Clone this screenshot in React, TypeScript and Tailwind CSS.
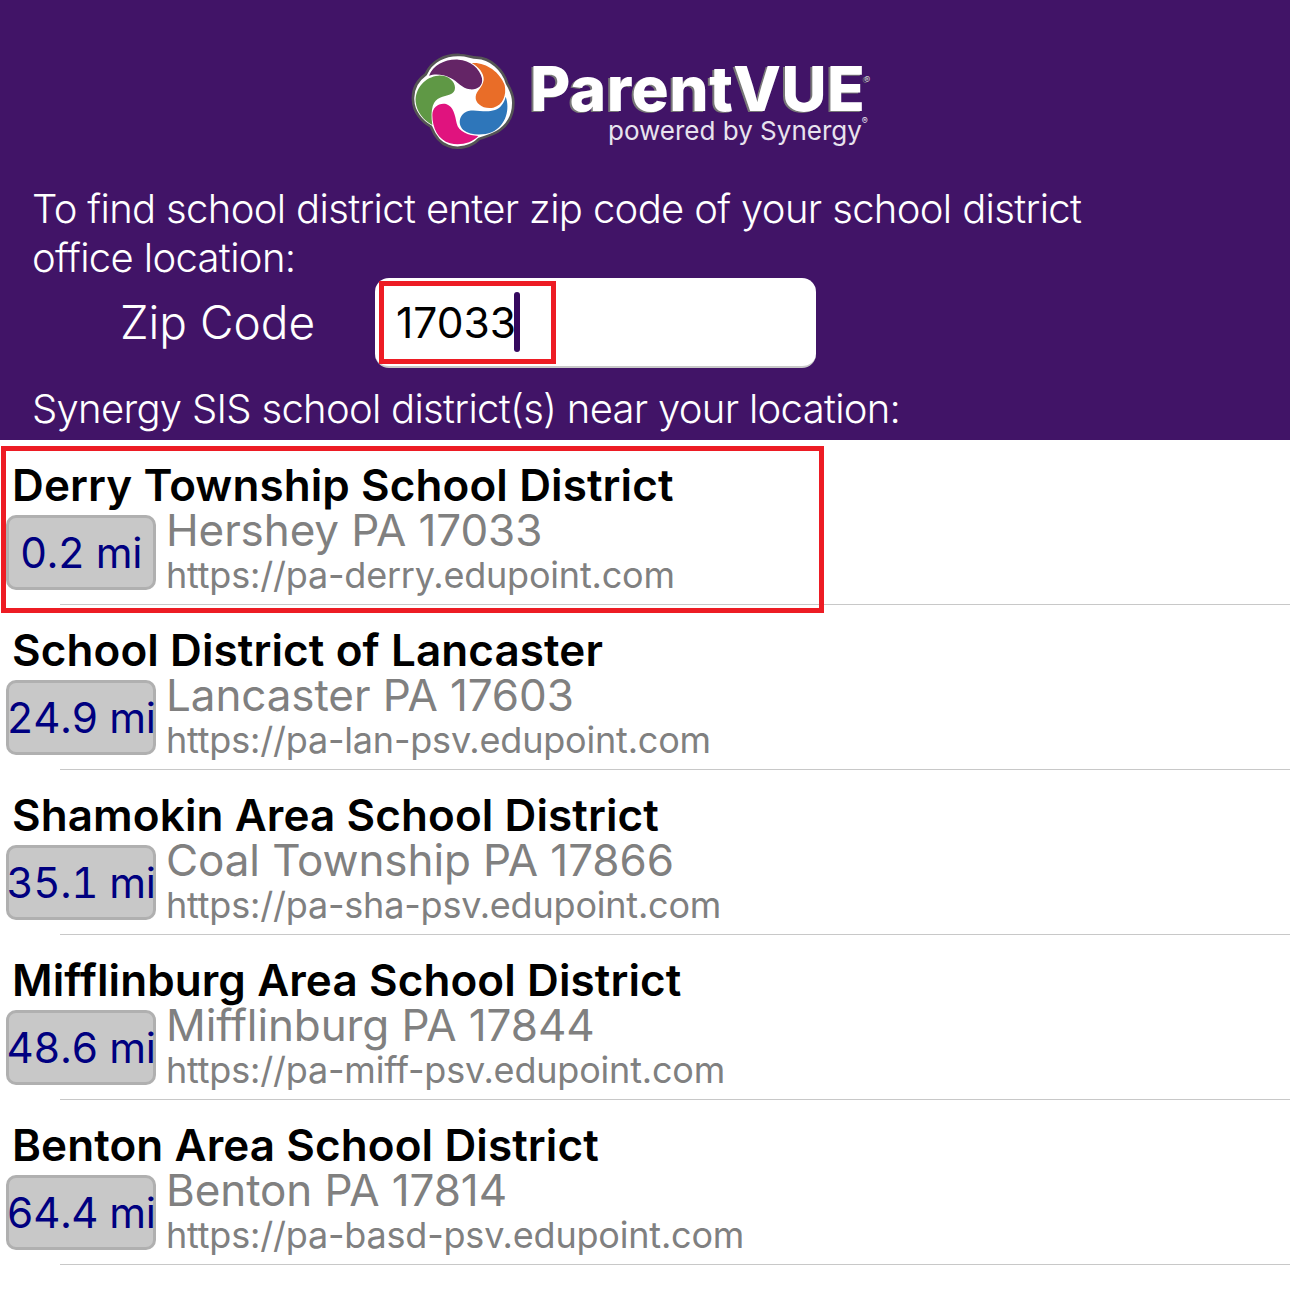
const DISTRICTS = [
  { name: "Derry Township School District", dist: "0.2 mi", addr: "Hershey PA 17033", url: "https://pa-derry.edupoint.com" },
  { name: "School District of Lancaster", dist: "24.9 mi", addr: "Lancaster PA 17603", url: "https://pa-lan-psv.edupoint.com" },
  { name: "Shamokin Area School District", dist: "35.1 mi", addr: "Coal Township PA 17866", url: "https://pa-sha-psv.edupoint.com" },
  { name: "Mifflinburg Area School District", dist: "48.6 mi", addr: "Mifflinburg PA 17844", url: "https://pa-miff-psv.edupoint.com" },
  { name: "Benton Area School District", dist: "64.4 mi", addr: "Benton PA 17814", url: "https://pa-basd-psv.edupoint.com" },
];

function Logo() {
  return (
    <svg width="115" height="110" viewBox="0 0 345 330" className="shrink-0">
      <path d="M62 88C80 48 120 28 165 30C185 30 200 38 215 38C255 38 295 75 306 115C312 125 326 150 325 175C325 205 312 235 285 255C265 270 240 275 222 282C200 305 160 315 130 303C105 295 88 270 78 245C50 230 25 200 24 165C22 130 38 105 62 88Z" fill="#fff" stroke="#555" strokeWidth="8" />
      <path d="M72 92C85 60 120 42 160 44C195 46 225 70 231 100C235 125 215 135 195 133C170 130 160 110 135 98C115 88 90 85 72 92Z" fill="#642566" />
      <path d="M200 54C240 50 285 80 299 120C305 150 295 180 265 188C235 194 210 175 212 155C214 135 232 130 236 105C238 85 220 65 200 54Z" fill="#e96d28" />
      <path d="M32 170C30 130 60 95 100 92C130 90 150 110 150 128C150 150 125 150 105 158C85 165 75 190 82 240C55 225 35 200 32 170Z" fill="#5f9845" />
      <path d="M302 155C315 190 305 240 260 262C235 272 195 272 175 255C155 235 165 205 190 198C215 192 240 205 270 195C285 190 297 175 302 155Z" fill="#2e76ba" />
      <path d="M82 210C82 185 105 172 125 178C145 185 150 210 155 235C160 260 190 272 220 273C200 295 165 302 135 295C100 285 82 250 82 210Z" fill="#e0137e" />
    </svg>
  );
}

export default function App() {
  return (
    <div className="relative h-[1308px] w-[1290px] overflow-hidden bg-white font-['Inter','Liberation_Sans',sans-serif]">
      <div className="h-[440px] bg-[#411467] text-white">
        <div className="flex h-[176px] items-start pl-[405px] pt-[45px]">
          <Logo />
          <div className="ml-[10px] flex flex-col pt-[13px]">
            <span className="whitespace-nowrap text-[62px] font-extrabold leading-[62px] tracking-[0.5px] [text-shadow:-2px_1px_0_#777]">
              ParentVUE<sup className="ml-[-1px] align-[24px] text-[9px] font-normal leading-none tracking-normal text-[#ccc]">®</sup>
            </span>
            <span className="ml-[78px] mt-[-3px] whitespace-nowrap text-[26px] leading-[28px] text-[#e8e3ee]">
              powered by Synergy<sup className="align-[12px] text-[9px] leading-none">®</sup>
            </span>
          </div>
        </div>
        <div className="pl-[32px] text-[40px] font-light leading-[49px] tracking-[-0.65px]">
          <p className="w-[1100px] pt-[8px]">To find school district enter zip code of your school district office location:</p>
        </div>
        <div className="mt-[-4px] flex items-center">
          <label className="mb-[2px] ml-[120px] w-[255px] text-[46px] font-light leading-[52px]">Zip Code</label>
          <div className="flex h-[90px] w-[441px] items-center rounded-[14px] border-b-2 border-[#c8c8c8] bg-white pl-[21px] text-[42.5px] text-black">
            <span className="pt-[2px]">17033</span>
            <span className="ml-[-2px] h-[60px] w-[6px] rounded-full bg-[#35095e]" />
          </div>
        </div>
        <p className="pl-[32px] pt-[16px] text-[40px] font-light leading-[49px] tracking-[-0.7px]">Synergy SIS school district(s) near your location:</p>
      </div>

      {DISTRICTS.map((d) => (
        <div key={d.name} className="relative h-[165px] pl-[6px]">
          <p className="pl-[6px] pt-[20px] text-[44px] font-semibold leading-[50px] tracking-[0.1px] text-black">{d.name}</p>
          <div className="flex items-start">
            <div className="mt-[5px] flex h-[75px] w-[150px] items-center justify-center whitespace-nowrap rounded-[10px] border-[3px] border-[#b0b0b0] bg-[#c8c8c8] text-[42px] tracking-[-0.3px] text-[#000080] tabular-nums">
              {d.dist}
            </div>
            <div className="ml-[10px] text-[#808080]">
              <p className="h-[45px] text-[44px] leading-[40px] tracking-[-0.1px]">{d.addr}</p>
              <p className="text-[36px] leading-[40px] tracking-[-0.2px]">{d.url}</p>
            </div>
          </div>
          <div className="absolute bottom-0 left-[60px] right-0 h-[1px] bg-[#c8c8c8]" />
        </div>
      ))}

      <div className="absolute left-[1px] top-[446px] h-[167px] w-[823px] border-[5px] border-[#ed1c24]" />
      <div className="absolute left-[379px] top-[281px] h-[83px] w-[177px] border-[5px] border-[#ed1c24]" />
    </div>
  );
}
